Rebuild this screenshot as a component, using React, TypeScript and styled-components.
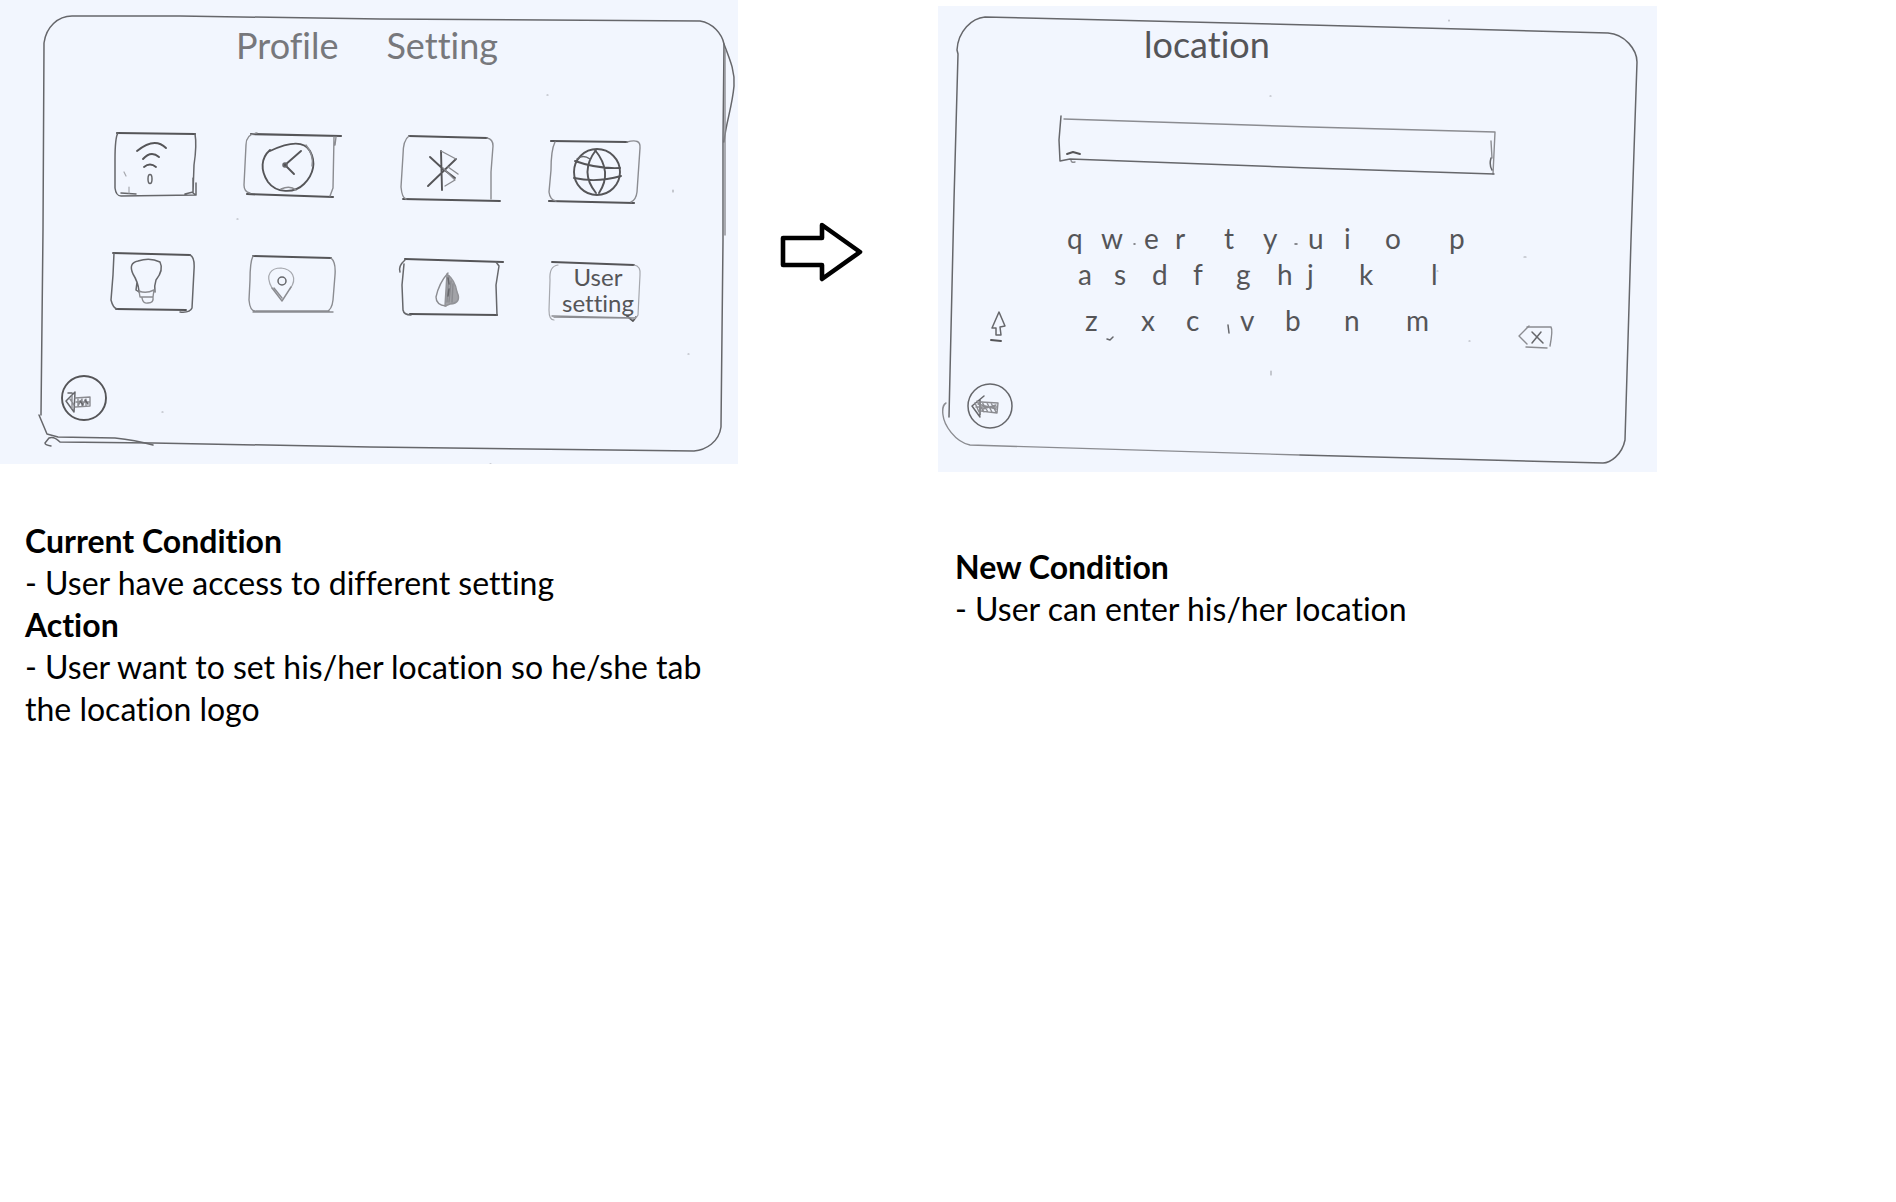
import React from "react";
import styled, { createGlobalStyle } from "styled-components";

const GlobalStyle = createGlobalStyle`
  * { box-sizing: border-box; }
  body {
    margin: 0;
    background: #ffffff;
    color: #000000;
    font-family: Lato, "Liberation Sans", sans-serif;
    font-variant-ligatures: none;
  }
  h1, h2, p { margin: 0; }
`;

const ink = "#555558";

const Board = styled.main`
  display: grid;
  grid-template-columns: 738fr 200fr 719fr 239fr;
  align-items: start;
`;

const Step = styled.section<{ $top?: number }>`
  padding-top: ${(p) => p.$top ?? 0}px;
`;

const Sheet = styled.div`
  position: relative;
  background: #f2f6fe;
  color: ${ink};
`;

const Outline = styled.svg`
  position: absolute;
  inset: 0;
  width: 100%;
  height: 100%;
  pointer-events: none;
`;

const Drawing = styled.svg`
  display: block;
  width: 100%;
  height: 100%;
`;

const Pencil = styled.g`
  fill: none;
  stroke: #66676b;
  stroke-width: 1.5;
  stroke-linecap: round;
  stroke-linejoin: round;

  .bold { stroke: ${ink}; stroke-width: 2.2; }
  .mid { stroke: ${ink}; stroke-width: 1.9; }
  .faint { stroke: #a6a8ae; stroke-width: 1.2; }
  .shade { stroke: #8b8c91; stroke-width: 1.4; }
  .fill { fill: ${ink}; }
  .tone { fill: #a2a3a8; stroke: #929398; }
`;

const ProfileTitle = styled.h1`
  display: flex;
  gap: 48px;
  padding: 25px 0 0 236px;
  font-size: 36px;
  line-height: 40px;
  font-weight: 400;
  color: #77787c;
`;

const LocationTitle = styled.h1`
  padding: 18px 0 0 206px;
  font-size: 36px;
  line-height: 40px;
  font-weight: 400;
`;

const Tiles = styled.nav`
  display: grid;
  grid-template-columns: 133fr 158fr 147fr 195fr;
  row-gap: 40px;
  padding: 63px 0 46px 105px;
`;

const SketchButton = styled.button`
  position: relative;
  display: block;
  padding: 0;
  border: 0;
  background: none;
  color: inherit;
  font: inherit;
  cursor: pointer;
`;

const Tile = styled(SketchButton)`
  width: 110px;
  height: 80px;
  padding-top: 4px;
  font-size: 24px;
  line-height: 26px;
`;

const BackBar = styled.div<{ $left: number }>`
  padding: 0 0 42px ${(p) => p.$left}px;
`;

const BackButton = styled(SketchButton)`
  width: 48px;
  height: 48px;
`;

const Field = styled.label`
  position: relative;
  display: block;
  height: 66px;
  margin: 48px 158px 42px 117px;
`;

const FieldInput = styled.input`
  width: 100%;
  height: 100%;
  padding: 8px 16px;
  border: 0;
  outline: 0;
  background: transparent;
  color: ${ink};
  font: inherit;
  font-size: 28px;
`;

const Keyboard = styled.div`
  display: flex;
  align-items: flex-end;
  padding: 0 99px 30px 50px;
`;

const SideKey = styled(SketchButton)<{ $width: number }>`
  flex: none;
  width: ${(p) => p.$width}px;
  height: 50px;
`;

const KeyRows = styled.div`
  flex: 1;
  padding: 0 0 14px 50px;
`;

const KeyRow = styled.div<{ $spans: number[]; $indent: number }>`
  display: grid;
  grid-template-columns: ${(p) => p.$spans.map((s) => `minmax(0, ${s}fr)`).join(" ")};
  padding-left: ${(p) => p.$indent}px;

  &:last-child { margin-top: 10px; }
`;

const Key = styled(SketchButton)`
  text-align: left;
  font-size: 28px;
  line-height: 36px;
`;

const Between = styled.div`
  padding: 221px 0 0 41px;
`;

const NextArrow = styled.svg`
  display: block;
  width: 84px;
  height: 62px;
`;

const Caption = styled.div<{ $top: number; $left: number }>`
  padding: ${(p) => p.$top}px 0 0 ${(p) => p.$left}px;
  font-size: 32px;
  line-height: 42px;
`;

const CaptionHead = styled.h2`
  font-size: inherit;
  font-weight: 700;
`;

// Every drawing uses the coordinates of the whole board, cropped by its viewBox.
const tiles = [
  {
    name: "Wi-Fi",
    box: "105 128 110 80",
    art: (
      <>
        <path className="bold" d="M117 133 L195 134" />
        <path d="M118 133 Q115 137 115 160 L115 188 Q116 196 121 196 L196 195 M121 193 L136 194 M195 134 Q197 145 194 165 L193 193 L196 195 V183 M193 178 V193 M185 194 L193 192" />
        <path className="faint" d="M129 187 V193 M124 172 L126 176" />
        <path className="mid" d="M137 151 C148 142 158 140 166 148 M143 159 Q151 150 159 157 M144 167 Q150 162 156 167" />
        <ellipse cx="150" cy="179" rx="2" ry="4.5" />
      </>
    ),
  },
  {
    name: "Clock",
    box: "238 128 110 80",
    art: (
      <>
        <path className="bold" d="M251 134 L341 136 M247 194 L333 197" />
        <path className="shade" d="M257 133 Q246 134 246 145 L244 185 Q244 192 250 193 M334 137 L333 188 L330 196 M336 137 L335 145" />
        <path className="mid" d="M270 151 C285 144 303 139 310 151 C316 162 314 174 304 184 C294 194 276 193 268 182 C260 170 261 158 270 150" />
        <path d="M306 145 Q314 155 312 166 M281 189 Q290 185 296 190" className="shade" />
        <path className="mid" d="M301 151 L285 165 L294 174" />
        <circle className="fill" cx="285" cy="165" r="2" />
      </>
    ),
  },
  {
    name: "Bluetooth",
    box: "396 128 110 80",
    art: (
      <>
        <path className="mid" d="M409 136 L487 138 M403 199 L500 201" />
        <path className="shade" d="M409 136 Q403 140 403 155 L401 187 Q402 198 406 199 M487 138 Q493 139 493 146 L491 172 V199" />
        <path className="mid" d="M441 151 L442 190 M430 157 L443 169 L455 178 M428 186 L456 159" />
        <path className="shade" d="M441 151 L456 159 M443 168 L455 180 L445 186 M448 167 L458 174" />
      </>
    ),
  },
  {
    name: "Language",
    box: "543 128 110 80",
    art: (
      <>
        <path className="bold" d="M551 141 L627 142 M549 201 L634 203" />
        <path className="shade" d="M627 142 Q641 138 640 148 L637 192 Q636 200 631 202 M555 142 Q551 150 551 170 L549 192 Q550 200 556 201" />
        <circle className="mid" cx="597" cy="172" r="23" />
        <path className="mid" d="M596 150 Q579 172 596 193 M595 150 Q613 172 599 193 M575 161 Q597 169 620 168 M574 178 Q597 183 621 176" />
        <path d="M577 159 Q583 154 590 159" />
      </>
    ),
  },
  {
    name: "Brightness",
    box: "105 248 110 80",
    art: (
      <>
        <path className="mid" d="M113 253 L190 255 M116 309 L186 310" />
        <path d="M114 253 L113 275 L111 300 Q113 308 117 309 M190 255 Q195 257 194 270 L192 308 Q190 313 180 312" />
        <path d="M139 291 Q138 282 133 274 Q128 263 138 261 Q150 257 160 262 Q164 270 156 280 Q154 286 155 292 M137 282 L136 290 L139 292" />
        <path className="shade" d="M139 291 Q146 294 154 290 L153 297 L140 297 Z M142 298 Q143 304 148 303 Q154 303 153 297" />
      </>
    ),
  },
  {
    name: "Location",
    box: "238 248 110 80",
    art: (
      <>
        <path className="mid" d="M253 256 L331 258" />
        <path className="shade" d="M253 256 Q250 262 250 280 L249 300 Q250 311 255 311 M331 258 Q336 262 335 275 L333 300 Q332 310 326 312 M253 312 L333 312 M256 311 L329 311" />
        <path className="faint" d="M272 288 C264 274 272 268 281 268 C292 269 298 278 290 289" />
        <path className="shade" d="M272 288 L282 301 L291 287 M274 288 L282 298" />
        <circle cx="282" cy="281" r="4" />
      </>
    ),
  },
  {
    name: "Display tone",
    box: "396 248 110 80",
    art: (
      <>
        <path className="bold" d="M405 259 L503 262 M410 314 L497 315" />
        <path d="M405 260 Q398 266 400 272 M404 264 L402 285 L403 310 Q404 315 411 315 M496 262 L499 266 L496 285 L497 315" />
        <path className="shade" d="M448 273 Q439 283 436 297 Q436 305 446 306" />
        <path className="tone" d="M447 274 Q455 280 457 292 Q462 303 450 304 L445 306 Z" />
        <path className="shade" d="M449 276 L447 302 M451 281 L449 302 M453 284 L452 302" />
        <path d="M448 278 L449 284 M449 289 L448 296" />
      </>
    ),
  },
  {
    name: "User setting",
    box: "543 248 110 80",
    art: (
      <>
        <path className="mid" d="M552 262 L634 265 M627 316 L633 321 L636 317" />
        <path className="shade" d="M552 316 L634 318 M554 317 L626 318" />
        <path className="faint" d="M558 265 Q549 266 550 280 L549 310 Q549 320 554 320 M634 265 Q641 266 640 275 L638 315 Q636 319 632 319" />
      </>
    ),
  },
];

const keyRows = [
  { letters: "qwertyuiop", indent: 7, spans: [34, 43, 31, 49, 39, 45, 36, 41, 64, 65] },
  { letters: "asdfghjkl", indent: 18, spans: [36, 38, 41, 43, 41, 30, 52, 72, 83] },
  { letters: "zxcvbnm", indent: 25, spans: [56, 45, 54, 45, 59, 62, 108] },
];

function ProfileSheet() {
  return (
    <Sheet>
      <Outline viewBox="0 0 738 464" preserveAspectRatio="none" aria-hidden="true">
        <Pencil>
          <path d="M41 415 L43 230 L44 43 C46 27 58 16 72 16 L180 16 L380 19 L700 21 C713 23 722 34 724 44 L723 140 L723 240 L721 427 C719 442 706 450 694 451 L370 447 L153 443 L60 442 Q54 436 49 438 L45 443 Q45 445 51 446" />
          <path d="M39 415 L47 434 L58 437 L115 438 Q135 440 153 445" />
          <path d="M724 44 C731 62 735 72 734 86 C732 108 726 122 724 142" />
          <path className="shade" d="M725 50 V235" />
          <path className="faint" d="M547 95 h1 M673 190 v2 M688 354 h1 M237 219 h1 M162 412 h1 M490 464 h1" />
        </Pencil>
      </Outline>
      <ProfileTitle>
        <span>Profile</span>
        <span>Setting</span>
      </ProfileTitle>
      <Tiles aria-label="Settings">
        {tiles.map((tile) => (
          <Tile key={tile.name} type="button" aria-label={tile.name}>
            <Outline viewBox={tile.box} aria-hidden="true">
              <Pencil>{tile.art}</Pencil>
            </Outline>
            {tile.name === "User setting" && (
              <>
                User
                <br />
                setting
              </>
            )}
          </Tile>
        ))}
      </Tiles>
      <BackBar $left={60}>
        <BackButton type="button" aria-label="Back">
          <Drawing viewBox="60 374 48 48" aria-hidden="true">
            <Pencil>
              <circle className="mid" cx="84" cy="398" r="22" />
              <path d="M75 392 L66 401 L74 412 Z M68 393 h4" />
              <path className="shade" d="M75 398 L90 397 L90 406 L75 407 M70 399 L74 405 M72 396 V408 M78 399 V406 L82 399 V406 L86 399 V406 M76 402 H89" />
              <path d="M80 401 L83 405 M85 400 L88 404" />
            </Pencil>
          </Drawing>
        </BackButton>
      </BackBar>
    </Sheet>
  );
}

function LocationSheet() {
  return (
    <Sheet>
      <Outline viewBox="938 6 719 466" preserveAspectRatio="none" aria-hidden="true">
        <Pencil>
          <path d="M949 417 L954 200 L958 54 L957 50 C958 31 972 18 985 17 L1310 25 L1608 33 C1625 34 1637 50 1637 62 L1631 240 L1625 440 C1622 455 1610 463 1603 463 L1300 455" />
          <path className="shade" d="M1300 455 L970 445 C955 442 944 425 943 415 C942 408 944 404 946 403" />
          <path d="M1134 244 h1 M1295 244 h2 M1228 325 L1229 333 M1107 339 l3 1 l3 -3" />
          <path className="faint" d="M1524 257 h2 M1270 96 h1 M1449 20 v1 M1469 341 h1 M1271 371 v4 M1437 271 h1" />
        </Pencil>
      </Outline>
      <LocationTitle>location</LocationTitle>
      <Field>
        <Outline viewBox="1055 112 444 66" preserveAspectRatio="none" aria-hidden="true">
          <Pencil>
            <path className="shade" d="M1064 119 L1310 127 L1495 132 L1493 174 M1491 141 L1492 158" />
            <path className="shade" d="M1071 160 Q1071 163 1075 162" />
            <path d="M1061 116 L1059 140 L1060 161 L1070 159 L1310 168 L1494 174 M1491 158 Q1489 165 1492 170" />
            <path className="mid" d="M1067 154 L1073 152 L1080 154" />
          </Pencil>
        </Outline>
        <FieldInput type="text" aria-label="Location" />
      </Field>
      <Keyboard>
        <SideKey type="button" aria-label="Shift" $width={22}>
          <Drawing viewBox="988 302 22 50" aria-hidden="true">
            <Pencil>
              <path d="M999 312 L992 328 L996 328 L996 335 L1001 335 L1000 327 L1005 326 Z" />
              <path className="mid" d="M991 340 L1001 341" />
            </Pencil>
          </Drawing>
        </SideKey>
        <KeyRows>
          {keyRows.map((row) => (
            <KeyRow key={row.letters} $spans={row.spans} $indent={row.indent}>
              {row.letters.split("").map((letter) => (
                <Key key={letter} type="button">
                  {letter}
                </Key>
              ))}
            </KeyRow>
          ))}
        </KeyRows>
        <SideKey type="button" aria-label="Delete" $width={44}>
          <Drawing viewBox="1514 302 44 50" aria-hidden="true">
            <Pencil>
              <path className="shade" d="M1527 327 L1551 327 Q1553 330 1550 346 M1526 347 L1547 348" />
              <path className="shade" d="M1529 326 L1519 336 L1527 344" />
              <path d="M1532 332 L1543 343 M1541 332 L1532 343" />
            </Pencil>
          </Drawing>
        </SideKey>
      </Keyboard>
      <BackBar $left={28}>
        <BackButton type="button" aria-label="Back">
          <Drawing viewBox="966 382 48 48" aria-hidden="true">
            <Pencil>
              <circle cx="990" cy="406" r="22" />
              <path d="M984 396 L972 406 L980 417 M980 400 V415" />
              <path className="shade" d="M981 402 L998 403 L997 413 L981 411 M975 403 L979 412 M977 401 L984 412 M982 402 L988 412 M987 403 L992 412 M991 403 L996 412 M983 409 L996 405 M976 407 H997 M978 404 L996 409" />
            </Pencil>
          </Drawing>
        </BackButton>
      </BackBar>
    </Sheet>
  );
}

export default function App() {
  return (
    <>
      <GlobalStyle />
      <Board>
        <Step>
          <ProfileSheet />
          <Caption $top={56} $left={25}>
            <CaptionHead>Current Condition</CaptionHead>
            <p>- User have access to different setting</p>
            <CaptionHead>Action</CaptionHead>
            <p>- User want to set his/her location so he/she tab the location logo</p>
          </Caption>
        </Step>
        <Between>
          <NextArrow viewBox="779 221 84 62" role="img" aria-label="leads to">
            <path
              d="M783 238 H822 V225 L860 252 L822 279 V265 H783 Z"
              fill="#ffffff"
              stroke="#000000"
              strokeWidth="4.6"
              strokeLinejoin="round"
            />
          </NextArrow>
        </Between>
        <Step $top={6}>
          <LocationSheet />
          <Caption $top={74} $left={17}>
            <CaptionHead>New Condition</CaptionHead>
            <p>- User can enter his/her location</p>
          </Caption>
        </Step>
      </Board>
    </>
  );
}
